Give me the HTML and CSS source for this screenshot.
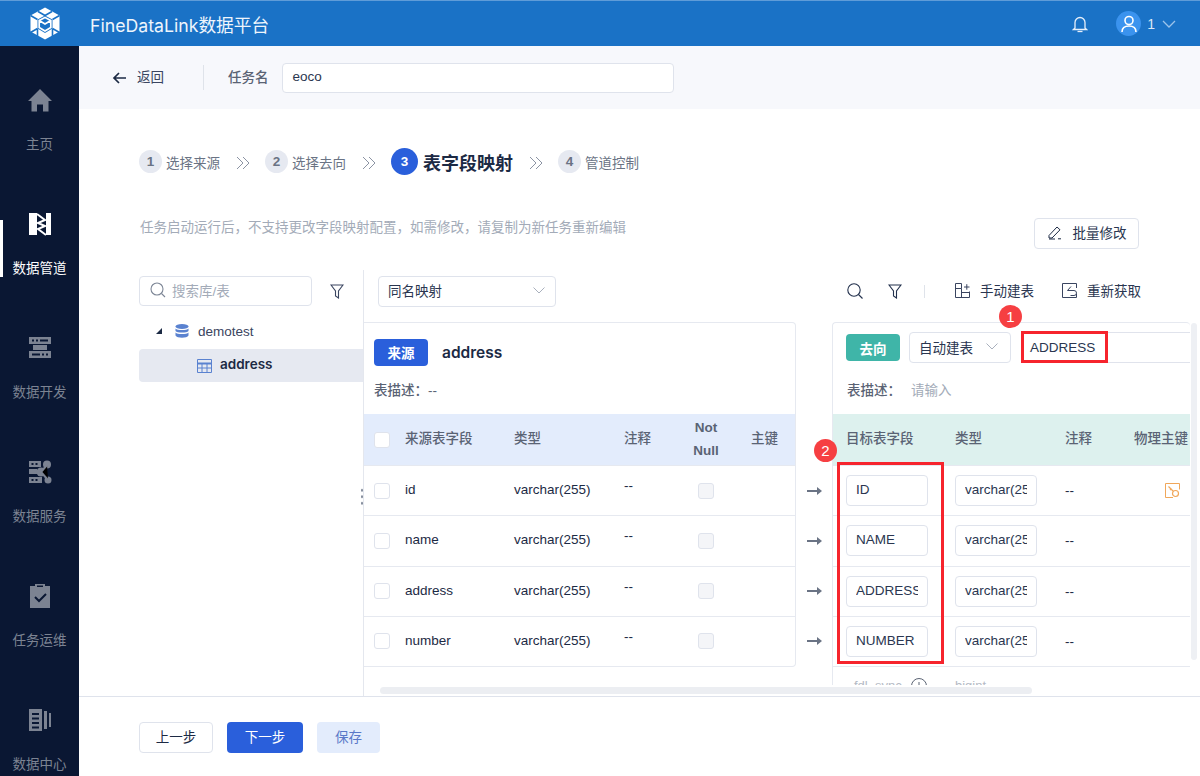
FILE: index.html
```html
<!DOCTYPE html>
<html lang="zh-CN">
<head>
<meta charset="utf-8">
<title>FineDataLink数据平台</title>
<link rel="stylesheet" href="styles.css">
</head>
<body>
<header class="topbar">
  <div class="logo-cell">
    <svg width="32" height="33" viewBox="0 0 32 33"><path fill="#fff" d="M16 .5L30.500 8.500V24.500L16 32.500 1.500 24.500V8.500z"/><g fill="none" stroke="#1a72c6" stroke-width="1.600"><path d="M9 4.500L16 8.500 23 4.500"/><path d="M1.500 8.500L8.500 12.500M30.500 8.500L23.500 12.500"/><path d="M8.500 21.500L1.500 25.500M23.500 21.500L30.500 25.500M8.500 21.500V29M23.500 21.500V29"/></g><path fill="#1a72c6" d="M16 8.500L23.500 12.500V21.500L16 26 8.500 21.500V12.500z"/><path fill="none" stroke="#fff" stroke-width="1.700" d="M16 10.500L21.800 13.500V20.500L16 24 10.200 20.500V13.500zM10.200 13.500L16 17 21.800 13.500"/></svg>
  </div>
  <div class="brand">FineDataLink数据平台</div>
  <div class="top-tools">
    <svg class="bell" width="16" height="18" viewBox="0 0 16 18"><path d="M3 13V7.500a5 5 0 0110 0V13l1.500 1.500h-13z" fill="none" stroke="#e6effa" stroke-width="1.300"/><path d="M5.500 16.500h5" stroke="#e6effa" stroke-width="1.300"/></svg>
    <span class="avatar"><svg width="18" height="20" viewBox="0 0 18 20"><circle cx="9" cy="6.500" r="4" fill="none" stroke="#fff" stroke-width="1.600"/><path d="M2 18c0-4 3-6 7-6s7 2 7 6" fill="none" stroke="#fff" stroke-width="1.600"/></svg></span>
    <span class="user">1</span>
    <svg width="14" height="8" viewBox="0 0 14 8"><path d="M1 1l6 6 6-6" fill="none" stroke="#9cc3ea" stroke-width="1.300"/></svg>
  </div>
</header>
<div class="layout">
  <nav class="sidebar">
    <a class="nav-item">
      <svg width="24" height="24" viewBox="0 0 24 24"><path fill="#7c8392" d="M12 1L0 13h3.500v10.500h5.500v-7h6v7h5.500V13H24z"/></svg>
      <span>主页</span>
    </a>
    <a class="nav-item active">
      <svg width="24" height="24" viewBox="0 0 24 24"><path fill="#fff" d="M1 1h8v22H1zM18 1h5v22h-5z"/><path fill="none" stroke="#fff" stroke-width="2" d="M9 2l8 6-7 3 7 3-7 3 8 6"/></svg>
      <span>数据管道</span>
    </a>
    <a class="nav-item">
      <svg width="24" height="24" viewBox="0 0 24 24"><g fill="#7c8392"><path fill-rule="evenodd" d="M1 1h22v7H1zM4 3.500v2h2v-2zM8 3.500v2h2v-2zM12 3.500v2h8v-2z"/><path d="M5 9h14v5H5z"/><path fill-rule="evenodd" d="M1 15h22v7H1zM4 17.500v2h8v-2zM14 17.500v2h2v-2zM18 17.500v2h2v-2z"/></g></svg>
      <span>数据开发</span>
    </a>
    <a class="nav-item">
      <svg width="24" height="24" viewBox="0 0 24 24"><g fill="#7c8392"><path fill-rule="evenodd" d="M1 1h12v6H1zM3.500 3v2h2V3zM7.500 3v2h2V3z"/><path d="M1 9h8v5H1z"/><path fill-rule="evenodd" d="M1 17h13v6H1zM3.500 19v2h2v-2zM7.500 19v2h2v-2z"/><circle cx="19" cy="4.500" r="4"/><circle cx="13" cy="12" r="4.500"/><circle cx="20" cy="20" r="3.500"/></g><path stroke="#7c8392" stroke-width="2" d="M19 5l-6 7 7 8"/></svg>
      <span>数据服务</span>
    </a>
    <a class="nav-item">
      <svg width="24" height="24" viewBox="0 0 24 24"><path fill="#7c8392" d="M2 2h5V0h10v2h5v22H2z"/><path fill="#0a1733" d="M9 3h6V1.500H9z"/><path fill="none" stroke="#0a1733" stroke-width="2" d="M7 13l4 4 7-7"/></svg>
      <span>任务运维</span>
    </a>
    <a class="nav-item">
      <svg width="24" height="24" viewBox="0 0 24 24"><path fill="#7c8392" fill-rule="evenodd" d="M1 1h13v22H1zM4 5v2h7V5zM4 9.500v2h7v-2zM4 14v2h7v-2zM4 18.500v2h7v-2z"/><path fill="#7c8392" d="M16 3h3v18h-3z"/><path fill="#7c8392" d="M21 5h2v14h-2z"/></svg>
      <span>数据中心</span>
    </a>
  </nav>
  <main class="content">
    <div class="taskbar">
      <span class="back"><svg width="15" height="12" viewBox="0 0 15 12"><path d="M14 6H2M7 1L2 6l5 5" fill="none" stroke="#1c2a44" stroke-width="1.700"/></svg>返回</span>
      <span class="bar-divider"></span>
      <span class="task-label">任务名</span>
      <span class="task-input">eoco</span>
    </div>
    <div class="work">
      <div class="steps">
        <span class="step"><b class="num">1</b>选择来源</span>
        <svg class="chev" width="14" height="14" viewBox="0 0 14 14"><path d="M1 1l6 6-6 6M7 1l6 6-6 6" fill="none" stroke="#8b93a3" stroke-width="1"/></svg>
        <span class="step"><b class="num">2</b>选择去向</span>
        <svg class="chev" width="14" height="14" viewBox="0 0 14 14"><path d="M1 1l6 6-6 6M7 1l6 6-6 6" fill="none" stroke="#8b93a3" stroke-width="1"/></svg>
        <span class="step current"><b class="num">3</b>表字段映射</span>
        <svg class="chev" width="14" height="14" viewBox="0 0 14 14"><path d="M1 1l6 6-6 6M7 1l6 6-6 6" fill="none" stroke="#8b93a3" stroke-width="1"/></svg>
        <span class="step"><b class="num">4</b>管道控制</span>
      </div>
      <div class="note-row">
        <span class="note">任务启动运行后，不支持更改字段映射配置，如需修改，请复制为新任务重新编辑</span>
        <span class="batch"><svg width="16" height="16" viewBox="0 0 16 16"><path d="M2 11.500L10 3l3 2.800-8 8.200H2zM2 15h6M11 14.800h3" fill="none" stroke="#1c2a44" stroke-width="1"/></svg>批量修改</span>
      </div>
      <div class="mapping">
        <aside class="tree">
          <div class="search">
            <span class="searchbox"><svg width="16" height="16" viewBox="0 0 16 16"><circle cx="7" cy="7" r="6" fill="none" stroke="#7d8696" stroke-width="1.100"/><path d="M11.500 11.500L15 15" stroke="#7d8696" stroke-width="1.100"/></svg>搜索库/表</span>
            <svg width="14" height="15" viewBox="0 0 14 15"><path d="M1 1h12L8.500 7v7l-3-2V7z" fill="none" stroke="#3a4560" stroke-width="1.100"/></svg>
          </div>
          <div class="db"><i class="tri"></i><svg width="14" height="14" viewBox="0 0 14 14"><g fill="#5a82d0"><ellipse cx="7" cy="2.500" rx="6.500" ry="2.500"/><path d="M.5 4.500C2 6.500 12 6.500 13.500 4.500v2.500C12 9 2 9 .5 7z"/><path d="M.5 8.500c1.500 2 11.500 2 13 0V11.500C12 14.500 2 14.500 .5 11.500z"/></g></svg>demotest</div>
          <div class="tbl"><svg width="15" height="14" viewBox="0 0 15 14"><path d="M.5.5h14v13H.5z" fill="none" stroke="#5a82d0"/><path d="M.5 4.500h14" stroke="#5a82d0" stroke-width="2"/><path d="M.5 9h14M5 4.500v9M10 4.500v9" stroke="#5a82d0"/></svg>address</div>
        </aside>
        <span class="handle"></span>
        <section class="panes">
          <div class="pane-tools">
            <span class="select map-select">同名映射<svg width="12" height="7" viewBox="0 0 12 7"><path d="M.5.500L6 6l5.500-5.500" fill="none" stroke="#a9b0bd"/></svg></span>
            <div class="tools-right">
              <svg width="16" height="16" viewBox="0 0 16 16"><circle cx="7" cy="7" r="6.200" fill="none" stroke="#22304c" stroke-width="1.100"/><path d="M11.500 11.500L15.500 15.500" stroke="#22304c" stroke-width="1.100"/></svg>
              <svg class="tool-f" width="14" height="15" viewBox="0 0 14 15"><path d="M1 1h12L8.500 7v7l-3-2V7z" fill="none" stroke="#22304c" stroke-width="1.100"/></svg>
              <span class="tool-sep"></span>
              <span class="tool"><svg width="15" height="15" viewBox="0 0 15 15"><path d="M6.500.5H.5v14h14V8.500M.5 5.500h6v9M6.500 9.500h8M6.500.5v5M9 4h5.500M11.800 1.200v5.500" fill="none" stroke="#3a4560"/></svg>手动建表</span>
              <span class="tool"><svg width="15" height="15" viewBox="0 0 15 15"><path d="M14.500 5V.5H.5v14h14V11M9 3.500L5.500 7.500H12a2.500 2.500 0 010 5H8.500" fill="none" stroke="#3a4560"/></svg>重新获取</span>
            </div>
          </div>
          <div class="cards">
            <div class="card source">
              <div class="card-head src-head"><span class="tag tag-blue">来源</span><b class="table-name">address</b></div>
              <div class="desc">表描述：<span class="dash">--</span></div>
              <div class="row head src-grid">
                <i class="check"></i><span>来源表字段</span><span>类型</span><span>注释</span><span class="nn">Not<br>Null</span><span class="pk-head">主键</span>
              </div>
              <div class="row src-grid"><i class="check"></i><span>id</span><span>varchar(255)</span><span class="lift">--</span><i class="check off"></i><span></span></div>
              <div class="row src-grid"><i class="check"></i><span>name</span><span>varchar(255)</span><span class="lift">--</span><i class="check off"></i><span></span></div>
              <div class="row src-grid"><i class="check"></i><span>address</span><span>varchar(255)</span><span class="lift">--</span><i class="check off"></i><span></span></div>
              <div class="row src-grid"><i class="check"></i><span>number</span><span>varchar(255)</span><span class="lift">--</span><i class="check off"></i><span></span></div>
            </div>
            <div class="arrows">
              <span></span>
              <svg width="15" height="10" viewBox="0 0 15 10"><path d="M0 5h12" stroke="#6a7384" stroke-width="2"/><path d="M10 1l5 4-5 4z" fill="#6a7384"/></svg>
              <svg width="15" height="10" viewBox="0 0 15 10"><path d="M0 5h12" stroke="#6a7384" stroke-width="2"/><path d="M10 1l5 4-5 4z" fill="#6a7384"/></svg>
              <svg width="15" height="10" viewBox="0 0 15 10"><path d="M0 5h12" stroke="#6a7384" stroke-width="2"/><path d="M10 1l5 4-5 4z" fill="#6a7384"/></svg>
              <svg width="15" height="10" viewBox="0 0 15 10"><path d="M0 5h12" stroke="#6a7384" stroke-width="2"/><path d="M10 1l5 4-5 4z" fill="#6a7384"/></svg>
            </div>
            <div class="card target">
              <div class="card-head tgt-head"><span class="tag tag-green">去向</span><span class="select auto-select">自动建表<svg width="12" height="7" viewBox="0 0 12 7"><path d="M.5.500L6 6l5.500-5.500" fill="none" stroke="#a9b0bd"/></svg></span><span class="name-input">ADDRESS</span></div>
              <div class="desc tgt-desc">表描述：<span class="placeholder">请输入</span></div>
              <div class="row head tgt-grid"><span>目标表字段</span><span>类型</span><span>注释</span><span class="pk-title">物理主键</span></div>
              <div class="row tgt-grid"><span class="field">ID</span><span class="field">varchar(255)</span><span>--</span><svg class="pk" width="15" height="15" viewBox="0 0 15 15"><path d="M8 14.500H.5V.5h14v6" fill="none" stroke="#f0a75a"/><circle cx="10.500" cy="10.500" r="3" fill="none" stroke="#f0a75a" stroke-width="1.200"/><path d="M8.500 8.500L3.500 3.500M5 7l1.500-1.500" fill="none" stroke="#f0a75a" stroke-width="1.200"/></svg></div>
              <div class="row tgt-grid"><span class="field">NAME</span><span class="field">varchar(255)</span><span>--</span><span></span></div>
              <div class="row tgt-grid"><span class="field">ADDRESS</span><span class="field">varchar(255)</span><span>--</span><span></span></div>
              <div class="row tgt-grid"><span class="field">NUMBER</span><span class="field">varchar(255)</span><span>--</span><span></span></div>
              <div class="row-peek"><span class="peek-name">fdl_sync</span><svg width="16" height="16" viewBox="0 0 16 16"><circle cx="8" cy="8" r="7.500" fill="none" stroke="#5b6474"/><path d="M8 4v5" stroke="#5b6474"/></svg><span class="peek-type">bigint</span></div>
            </div>
          </div>
          <span class="vscroll"></span>
          <span class="hscroll"></span>
          <span class="mark mark-one"></span>
          <span class="mark mark-two"></span>
          <span class="badge badge-one">1</span>
          <span class="badge badge-two">2</span>
        </section>
      </div>
    </div>
    <footer class="footer">
      <span class="btn btn-line">上一步</span>
      <span class="btn btn-main">下一步</span>
      <span class="btn btn-soft">保存</span>
    </footer>
  </main>
</div>
</body>
</html>
```
FILE: styles.css
```css
* { box-sizing: border-box; }
html, body { margin: 0; height: 100%; }
body {
  width: 1200px;
  height: 776px;
  overflow: hidden;
  font-family: "Liberation Sans", "Noto Sans CJK SC", sans-serif;
  font-size: 13.5px;
  color: #1c2a44;
  background: #fff;
  display: flex;
  flex-direction: column;
}
.topbar {
  height: 46px;
  flex: none;
  display: flex;
  align-items: center;
  background: #1a72c6;
  border-top: 1px solid #5f9cd8;
  color: #fff;
}
.logo-cell { width: 79px; padding-left: 29px; display: flex; }
.brand { margin-left: 11px; font-family: Inter, "Noto Sans CJK SC", sans-serif; font-size: 17.7px; color: #eef5fc; }
.top-tools { margin-left: auto; display: flex; align-items: center; padding-right: 24px; }
.bell { margin-right: 28px; margin-left: -1px; }
.avatar {
  width: 25px; height: 25px; border-radius: 50%;
  background: #3b93ee;
  display: flex; align-items: center; justify-content: center;
  margin-right: 6px;
}
.user { font-size: 14px; color: #dbe8f6; margin-right: 7px; }
.layout { flex: 1; display: flex; min-height: 0; }
.sidebar {
  width: 79px; flex: none;
  background: #0a1733;
  padding-top: 42px;
  display: flex; flex-direction: column;
  overflow: hidden;
}
.nav-item {
  height: 124px; flex: none;
  position: relative;
  display: flex; flex-direction: column; align-items: center;
  color: #7c8392;
  font-size: 13.5px;
  line-height: 20px;
}
.nav-item svg { margin-bottom: 23px; }
.nav-item span { white-space: nowrap; }
.nav-item.active { color: #fff; }
.nav-item.active::before {
  content: ""; position: absolute; left: 0; top: 8px;
  width: 3px; height: 57px; background: #fff;
}
.content { flex: 1; min-width: 0; display: flex; flex-direction: column; }
.taskbar {
  height: 63px; flex: none;
  background: #f7f8fc;
  padding-left: 33px;
  display: flex; align-items: center;
}
.back { display: flex; align-items: center; gap: 10px; color: #3a4560; width: 91px; margin-bottom: 3px; }
.back svg { margin-top: 3px; }
.bar-divider { width: 1px; height: 25px; background: #dfe3ea; }
.task-label { margin-left: 24px; color: #5a6374; font-weight: 500; margin-bottom: 3px; }
.task-input {
  margin-left: 13px; width: 392px; height: 30px;
  background: #fff; border: 1px solid #dfe3ec; border-radius: 4px;
  padding-left: 10px; line-height: 25px; color: #2a3650;
}
.work { flex: 1; min-height: 0; padding: 39px 0 0 60px; display: flex; flex-direction: column; }
.steps { display: flex; align-items: center; height: 27px; color: #6a7384; }
.step { display: flex; align-items: center; gap: 4px; }
.num {
  width: 23px; height: 23px; border-radius: 50%;
  background: #e6e9f1; color: #6a7384;
  display: flex; align-items: center; justify-content: center;
  font-size: 13.5px; font-weight: 700;
}
.chev { margin: 2px 15px 0 16px; }
.step.current { font-size: 18px; font-weight: 700; color: #1c2a44; gap: 5px; }
.step.current .num { width: 27px; height: 27px; background: #2a5fdb; color: #fff; font-size: 13.5px; font-weight: 700; }
.note-row { display: flex; align-items: flex-start; justify-content: space-between; margin-top: 28px; height: 46px; padding-right: 61px; }
.note { color: #a3abb8; margin: 13px 0 0 1px; }
.batch {
  width: 105px; height: 31px; margin-top: 15px;
  border: 1px solid #dfe3ec; border-radius: 4px;
  display: flex; align-items: center; justify-content: center; gap: 10px;
  color: #2a3650; padding-bottom: 3px;
}
.mapping { flex: 1; min-height: 0; display: flex; margin-top: 21px; position: relative; }
.tree { width: 224px; flex: none; }
.search { display: flex; align-items: center; gap: 18px; margin-top: 6px; }
.searchbox {
  width: 173px; height: 30px;
  border: 1px solid #dfe3ec; border-radius: 4px;
  display: flex; align-items: center; gap: 6px; padding: 0 0 2px 10px;
  color: #a3abb8;
}
.db { display: flex; align-items: center; margin-top: 13px; height: 24px; padding-left: 17px; color: #3a4560; }
.tri { width: 0; height: 0; border-style: solid; border-width: 0 0 6px 6px; border-color: transparent transparent #1c2a44 transparent; margin-right: 13px; }
.db svg { margin-right: 9px; }
.tbl {
  display: flex; align-items: center; gap: 8px;
  margin-top: 6px; height: 33px; padding: 0 0 4px 58px;
  background: #e6e9f1; border-radius: 4px 0 0 4px;
  font-family: Inter, "Noto Sans CJK SC", sans-serif;
  font-weight: 600; color: #1c2a44;
}
.tbl svg { margin-top: 4px; }
.panes { flex: 1; min-width: 0; position: relative; border-left: 1px solid #e4e7ee; overflow: hidden; }
.handle {
  position: absolute; left: 219px; top: 217px; z-index: 2;
  width: 10px; height: 19px;
  background-image: radial-gradient(circle, #7d8696 1px, transparent 1.200px);
  background-size: 8px 6.500px;
}
.pane-tools { display: flex; align-items: center; height: 52px; padding: 0 0 10px 14px; }
.select {
  display: flex; align-items: center; justify-content: space-between;
  border: 1px solid #dfe3ec; border-radius: 4px; height: 31px; padding: 0 10px 2px 9px; color: #2a3650;
}
.map-select { width: 178px; flex: none; }
.tools-right { margin-left: 291px; display: flex; align-items: center; }
.tool-f { margin-left: 25px; }
.tool-sep { width: 1px; height: 13px; background: #dfe3ea; margin: 0 30px 0 22px; }
.tool { display: flex; align-items: center; gap: 10px; margin: 0 28px 2px 0; color: #2a3650; white-space: nowrap; }
.cards { display: flex; align-items: flex-start; }
.card { border: 1px solid #e6e9f0; border-bottom: 0; border-radius: 4px 4px 0 0; flex: none; }
.source { width: 432px; border-left: 0; border-bottom: 1px solid #e6e9f0; border-radius: 0 4px 4px 0; }
.target { width: 358px; height: 363px; border-right: 0; overflow: hidden; }
.card-head { display: flex; align-items: center; height: 47px; padding: 0 0 0 10px; }
.src-head { padding-top: 11px; }
.tag {
  width: 54px; height: 27px; border-radius: 4px; flex: none;
  display: flex; align-items: center; justify-content: center;
  color: #fff; font-weight: 700;
}
.tag-blue { background: #2a5fdb; }
.tag-green { background: #3fb5a8; }
.table-name { margin-left: 14px; font-family: Inter, sans-serif; font-size: 15.500px; font-weight: 600; color: #1c2a44; }
.tgt-head { padding: 2px 0 0 13px; }
.auto-select { width: 102px; margin-left: 9px; flex: none; padding-right: 12px; }
.name-input {
  margin-left: 10px; flex: 1; height: 31px;
  border: 1px solid #e0e3ec; border-width: 1px 0; padding-left: 9px; line-height: 29px; color: #2a3650;
}
.desc { height: 44px; padding: 8px 0 0 10px; line-height: 25px; color: #5a6374; font-weight: 500; }
.dash { color: #5a6374; }
.tgt-desc { padding-left: 14px; }
.placeholder { margin-left: 10px; color: #a3abb8; font-weight: 400; }
.row { height: 50.250px; border-top: 1px solid #e6e9f0; display: grid; align-items: center; }
.row.head { height: 51px; border-top: 0; color: #5a6374; font-weight: 500; line-height: 23px; }
.source .head { background: #e3ecfc; }
.target .head { background: #ddf1ee; }
.src-grid { grid-template-columns: 31px 109px 110px 58px 48px 1fr; padding-left: 10px; }
.tgt-grid { grid-template-columns: 109px 110px 69px 1fr; padding-left: 13px; }
.src-grid > span, .row.head > span { margin-bottom: 2px; }
.nn { text-align: center; font-weight: 700; }
.pk-head { margin-left: 21px; white-space: nowrap; }
.pk-title { white-space: nowrap; }
.src-grid > .lift { margin-bottom: 10px; }
.check { width: 16px; height: 16px; background: #fff; border: 1px solid #dfe3ec; border-radius: 3px; display: block; }
.check.off { background: #f4f5f8; justify-self: center; }
.arrows {
  width: 36px; flex: none;
  display: grid; grid-template-rows: 142px repeat(4, 50.250px);
  justify-items: center; align-items: center;
}
.arrows svg { margin-top: 3px; }
.field {
  display: block; width: 82px; height: 31px;
  border: 1px solid #dfe3ec; border-radius: 4px;
  padding: 0 9px; line-height: 28px; color: #2a3650;
  overflow: clip; overflow-clip-margin: content-box; white-space: nowrap; background: #fff;
}
.pk { justify-self: start; margin-left: 31px; }
.row-peek { border-top: 1px solid #e6e9f0; height: 50px; padding: 11px 0 0 21px; display: flex; align-items: flex-start; color: #b4bac5; font-size: 13px; }
.peek-name { width: 57px; }
.peek-type { margin-left: 28px; }
.vscroll {
  position: absolute; right: 3px; top: 53px;
  width: 6px; height: 337px; border-radius: 3px; background: #eef0f4;
}
.hscroll {
  position: absolute; left: 16px; top: 417px;
  width: 652px; height: 7px; border-radius: 4px; background: #eceef2;
}
.mark { position: absolute; border: 3px solid #f6242d; }
.mark-one { left: 657px; top: 61px; width: 87px; height: 32px; }
.mark-two { left: 473px; top: 192px; width: 107px; height: 202px; }
.badge {
  position: absolute; width: 23px; height: 23px; border-radius: 50%;
  background: #f63f42; color: #fff; font-size: 15px;
  display: flex; align-items: center; justify-content: center;
}
.badge-one { left: 635px; top: 35px; }
.badge-two { left: 450px; top: 169px; }
.footer {
  height: 80px; flex: none;
  border-top: 1px solid #dfe3ec;
  padding: 25px 0 0 60px;
  display: flex; align-items: flex-start; gap: 14px;
  background: #fff;
}
.btn {
  height: 31px; border-radius: 4px; padding-bottom: 3px;
  display: flex; align-items: center; justify-content: center;
}
.btn-line { width: 74px; border: 1px solid #dfe3ec; color: #1c2a44; }
.btn-main { width: 76px; background: #2a5fdb; color: #fff; }
.btn-soft { width: 63px; background: #e3ecfc; color: #5a78c8; }
```
